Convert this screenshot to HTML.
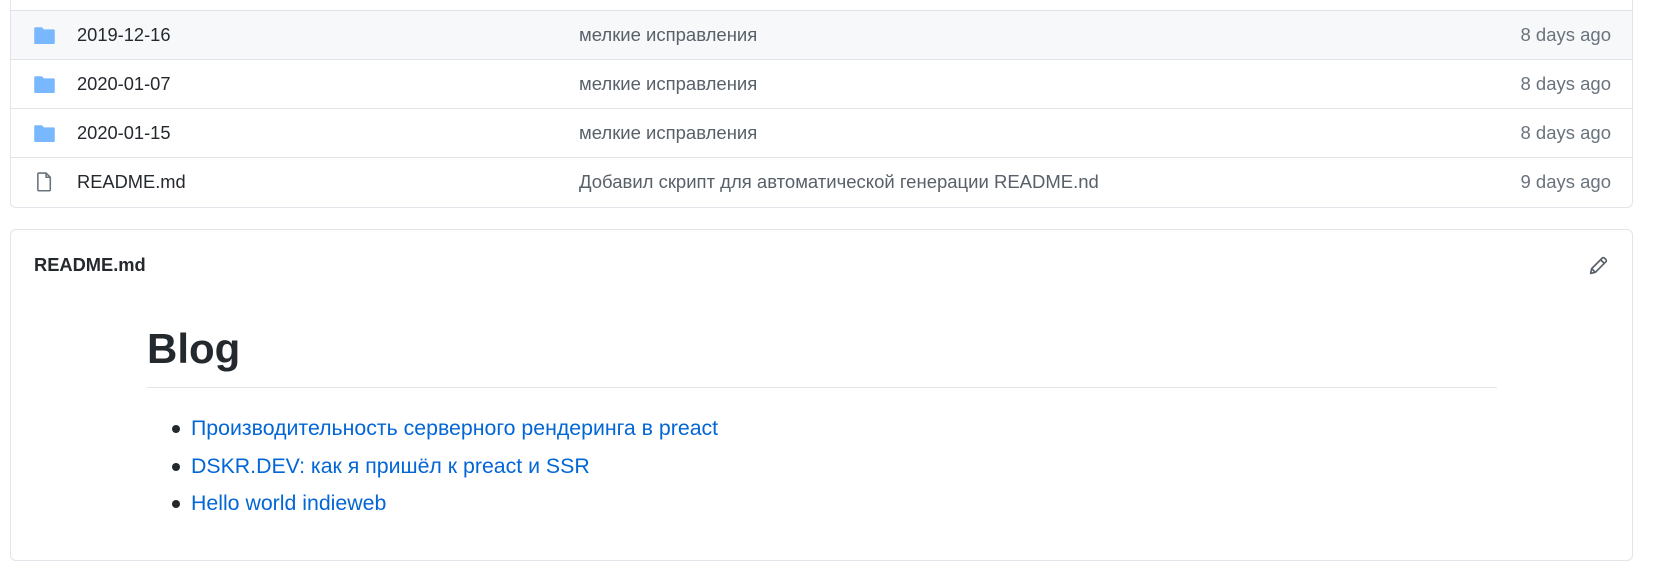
<!DOCTYPE html>
<html><head><meta charset="utf-8"><style>
*{margin:0;padding:0;box-sizing:border-box}
body{width:1658px;height:576px;background:#fff;position:relative;overflow:hidden;font-family:"Liberation Sans",Arial,sans-serif;color:#24292e}
.box1{position:absolute;left:10px;top:-40px;width:1623px;height:248px;border:1px solid #e1e4e8;border-radius:6px}
.row{position:absolute;left:11px;width:1621px;height:49px;border-top:1px solid #e1e4e8}
.t{position:absolute;font-size:18.3px;line-height:20px;white-space:nowrap}
.name{left:66px;top:14px;color:#24292e}
.msg{left:568px;top:14px;color:#586069;font-size:18.5px}
.age{right:21px;top:14px;color:#6a737d;font-size:18.5px}
.ic{position:absolute;left:23px;top:15px}
.box2{position:absolute;left:10px;top:229px;width:1623px;height:332px;border:1px solid #e1e4e8;border-radius:6px}
a{color:#0366d6;text-decoration:none}
</style></head><body>
<div class="box1"></div>
<div class="row" style="top:10px;background:#f6f8fa">
<svg class="ic" width="21" height="18" viewBox="0 0 16 14"><path d="M1 1h5l1.5 1.6H15a1 1 0 0 1 1 1V13a1 1 0 0 1-1 1H1a1 1 0 0 1-1-1V2a1 1 0 0 1 1-1z" fill="#79b8ff"/></svg>
<span class="t name">2019-12-16</span><span class="t msg">мелкие исправления</span><span class="t age">8 days ago</span></div>
<div class="row" style="top:59px">
<svg class="ic" width="21" height="18" viewBox="0 0 16 14"><path d="M1 1h5l1.5 1.6H15a1 1 0 0 1 1 1V13a1 1 0 0 1-1 1H1a1 1 0 0 1-1-1V2a1 1 0 0 1 1-1z" fill="#79b8ff"/></svg>
<span class="t name">2020-01-07</span><span class="t msg">мелкие исправления</span><span class="t age">8 days ago</span></div>
<div class="row" style="top:108px">
<svg class="ic" width="21" height="18" viewBox="0 0 16 14"><path d="M1 1h5l1.5 1.6H15a1 1 0 0 1 1 1V13a1 1 0 0 1-1 1H1a1 1 0 0 1-1-1V2a1 1 0 0 1 1-1z" fill="#79b8ff"/></svg>
<span class="t name">2020-01-15</span><span class="t msg">мелкие исправления</span><span class="t age">8 days ago</span></div>
<div class="row" style="top:157px;height:50px">
<svg class="ic" style="left:26px;top:14px" width="15" height="20" viewBox="0 0 14 19"><path d="M1.5 1h7l4 4v12a.8.8 0 0 1-.8.8H1.5a.8.8 0 0 1-.8-.8V1.8A.8.8 0 0 1 1.5 1zM8.5 1v4h4" fill="none" stroke="#6a737d" stroke-width="1.5" stroke-linejoin="round"/></svg>
<span class="t name">README.md</span><span class="t msg">Добавил скрипт для автоматической генерации README.nd</span><span class="t age">9 days ago</span></div>

<div class="box2"></div>
<span class="t" style="left:34px;top:255px;font-weight:bold;color:#24292e">README.md</span>
<svg style="position:absolute;left:1588px;top:255px" width="21" height="21" viewBox="0 0 20 20"><path d="M2.5 17.5l1-4.5L13.5 3a1.6 1.6 0 0 1 2.3 0l1.2 1.2a1.6 1.6 0 0 1 0 2.3L7 16.5zM12 4.5l3.5 3.5M3.5 13l3.5 3.5" fill="none" stroke="#586069" stroke-width="1.6" stroke-linejoin="round"/></svg>
<div style="position:absolute;left:147px;top:325px;font-size:42px;font-weight:bold;line-height:48px;color:#24292e">Blog</div>
<div style="position:absolute;left:147px;top:387px;width:1350px;height:1px;background:#e1e4e8"></div>
<div style="position:absolute;left:191px;top:410px;font-size:21.3px;line-height:37.5px">
<div style="position:relative"><span style="position:absolute;left:-19px;top:15px;width:8px;height:8px;border-radius:50%;background:#24292e"></span><a>Производительность серверного рендеринга в preact</a></div>
<div style="position:relative"><span style="position:absolute;left:-19px;top:15px;width:8px;height:8px;border-radius:50%;background:#24292e"></span><a>DSKR.DEV: как я пришёл к preact и SSR</a></div>
<div style="position:relative"><span style="position:absolute;left:-19px;top:15px;width:8px;height:8px;border-radius:50%;background:#24292e"></span><a>Hello world indieweb</a></div>
</div>
</body></html>
